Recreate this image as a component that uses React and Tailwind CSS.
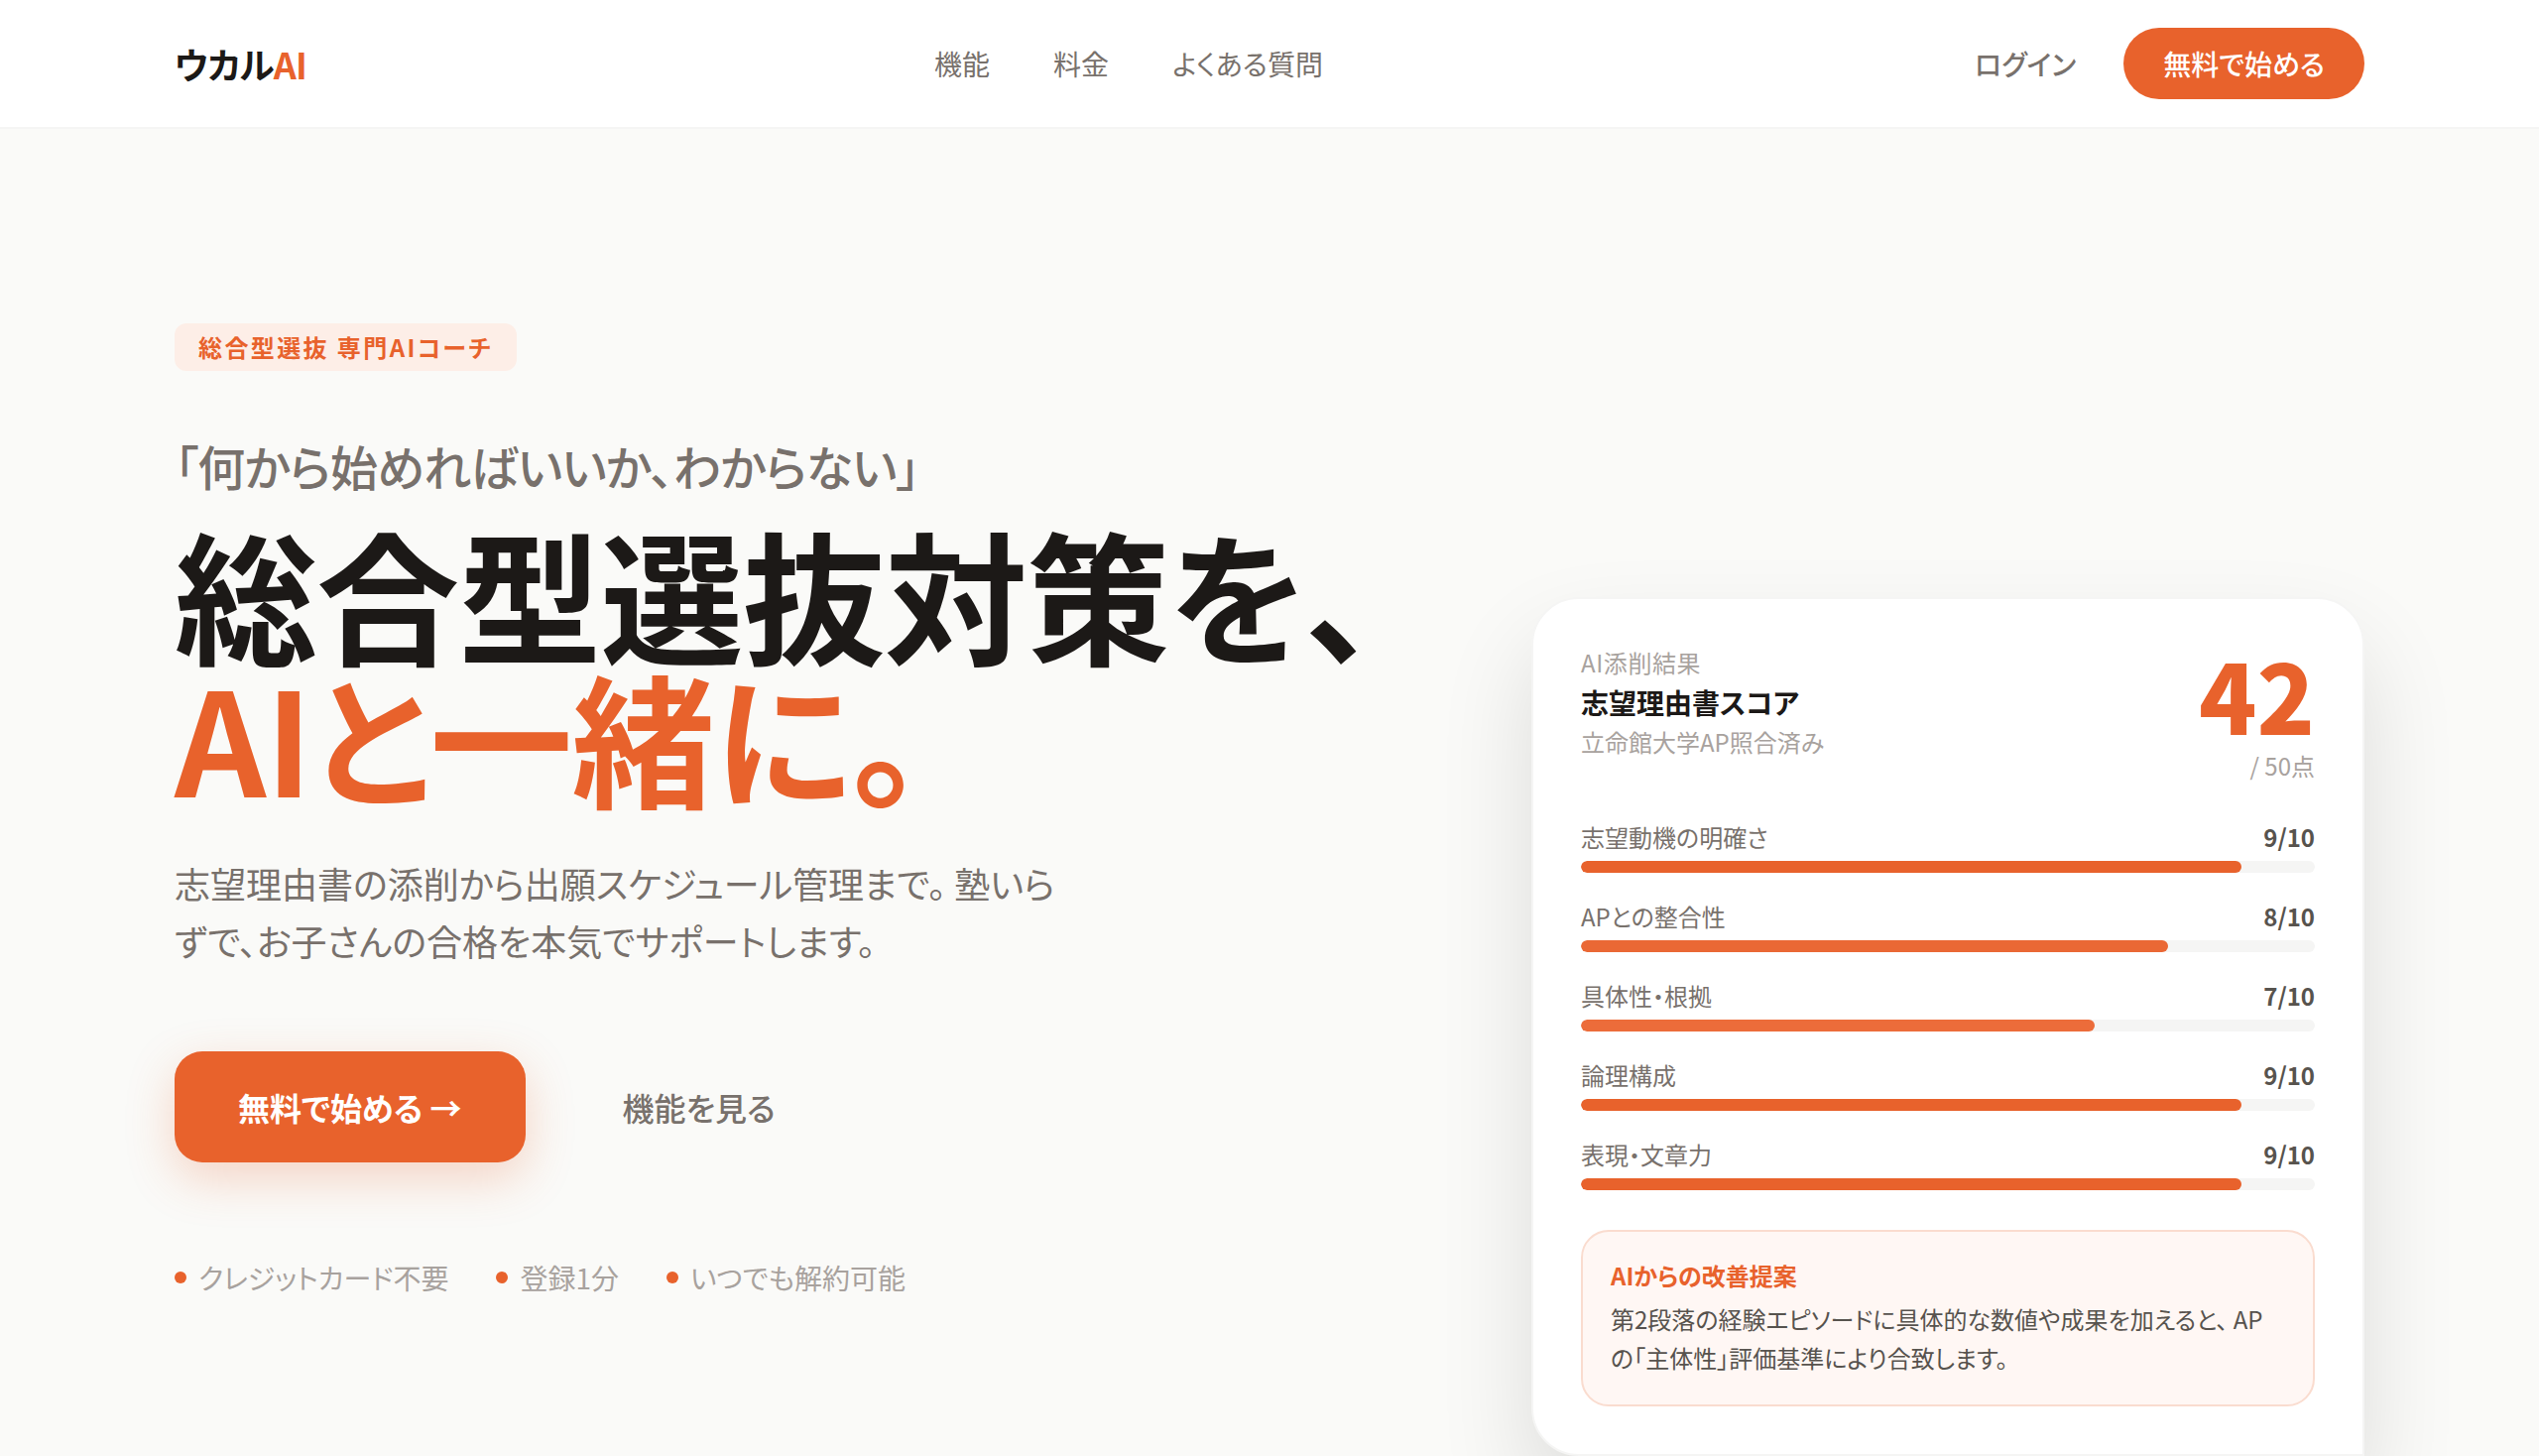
const scores = [
  { label: '志望動機の明確さ', value: 9, tone: 'bg-[#e8622c]' },
  { label: 'APとの整合性', value: 8, tone: 'bg-[#ea6835]' },
  { label: '具体性・根拠', value: 7, tone: 'bg-[#ec6c3a]' },
  { label: '論理構成', value: 9, tone: 'bg-[#e8622c]' },
  { label: '表現・文章力', value: 9, tone: 'bg-[#e8622c]' },
];
const perks = ['クレジットカード不要', '登録1分', 'いつでも解約可能'];

function Header() {
  return (
    <header className="border-b-2 border-[#f5f5f4] bg-white">
      <div className="mx-auto flex h-32 max-w-[2208px] items-center justify-between">
        <a href="#top" className="text-[36px] leading-[56px] font-bold tracking-tight text-[#1c1917]">
          ウカル<span className="text-[#e8622c]">AI</span>
        </a>
        <nav className="flex gap-16 text-[28px] leading-10 text-[#78716c]">
          <a href="#features">機能</a>
          <a href="#pricing">料金</a>
          <a href="#faq">よくある質問</a>
        </nav>
        <div className="flex items-center gap-6 text-[28px] leading-10 font-medium">
          <a href="#login" className="px-6 text-[#78716c]">ログイン</a>
          <button type="button" className="rounded-full bg-[#e8622c] px-10 py-4 font-medium text-white">無料で始める</button>
        </div>
      </div>
    </header>
  );
}

function ScoreCard() {
  return (
    <section className="w-[840px] shrink-0 rounded-[48px] rounded-br-none border-2 border-[#f5f5f4] bg-white p-12 shadow-[0_48px_96px_rgba(0,0,0,0.12)]">
      <div className="mb-10 flex items-start justify-between">
        <div>
          <p className="text-[24px] leading-8 tracking-wide text-[#a8a29e]">AI添削結果</p>
          <h2 className="my-1 text-[28px] leading-10 font-bold text-[#1c1917]">志望理由書スコア</h2>
          <p className="text-[24px] leading-8 text-[#a8a29e]">立命館大学AP照合済み</p>
        </div>
        <div className="text-right">
          <p className="mb-2 text-[96px] leading-[96px] font-black text-[#e8622c]">42</p>
          <p className="text-[24px] leading-8 text-[#a8a29e]">/ 50点</p>
        </div>
      </div>
      <div className="flex flex-col gap-7">
        {scores.map((s) => (
          <div key={s.label}>
            <div className="mb-2 flex justify-between text-[24px] leading-8">
              <span className="text-[#78716c]">{s.label}</span>
              <span className="font-semibold text-[#57534e]">{s.value}/10</span>
            </div>
            <div className="h-3 overflow-hidden rounded-full bg-[#f5f5f4]">
              <div className={'h-full rounded-full ' + s.tone} style={{ width: s.value * 10 + '%' }} />
            </div>
          </div>
        ))}
      </div>
      <div className="mt-10 rounded-[28px] border-2 border-[#fadccf] bg-[#fff7f4] p-7">
        <h3 className="mb-2 text-[24px] leading-8 font-bold text-[#e8622c]">AIからの改善提案</h3>
        <p className="text-[24px] leading-[39px] text-[#57534e]">
          第2段落の経験エピソードに具体的な数値や成果を加えると、 APの「主体性」評価基準により合致します。
        </p>
      </div>
    </section>
  );
}

export default function App() {
  return (
    <div id="top" lang="ja" className="h-screen overflow-hidden bg-[#fafaf8] font-['Noto_Sans_CJK_JP',sans-serif] [font-feature-settings:'palt']">
      <Header />
      <main className="mx-auto flex max-w-[2208px] items-start justify-between">
        <div className="pt-[196px]">
          <p className="w-fit rounded-xl bg-[#fdeee7] px-6 py-2 text-[24px] leading-8 font-semibold tracking-widest text-[#e8622c]">
            総合型選抜 専門AIコーチ
          </p>
          <h1 className="mt-[59px] text-[32px] font-bold tracking-tight">
            <span className="mb-5 block text-[48px] leading-[72px] font-medium text-[#78716c]">「何から始めればいいか、わからない」</span>
            <span className="block text-[144px] leading-[144px] text-[#1c1917]">総合型選抜対策を、</span>
            <span className="block text-[144px] leading-[144px] text-[#e8622c]">AIと一緒に。</span>
          </h1>
          <p className="mt-12 max-w-[896px] text-[36px] leading-[58px] text-[#78716c]">
            志望理由書の添削から出願スケジュール管理まで。 塾いらずで、お子さんの合格を本気でサポートします。
          </p>
          <div className="mt-[83px] flex items-center gap-8 text-[32px] leading-[48px]">
            <button type="button" className="rounded-[28px] bg-[#e8622c] px-16 py-8 font-bold text-white shadow-[0_16px_48px_rgba(232,98,44,0.25)]">
              無料で始める →
            </button>
            <a href="#features" className="rounded-[28px] border-2 border-transparent px-16 py-7 font-medium text-[#78716c]">機能を見る</a>
          </div>
          <ul className="mt-24 flex gap-12 text-[28px] leading-10 text-[#a8a29e]">
            {perks.map((p) => (
              <li key={p} className="flex items-center gap-3">
                <span className="size-3 rounded-full bg-[#e8622c]" />
                {p}
              </li>
            ))}
          </ul>
        </div>
        <div className="pt-[472px]">
          <ScoreCard />
        </div>
      </main>
    </div>
  );
}
